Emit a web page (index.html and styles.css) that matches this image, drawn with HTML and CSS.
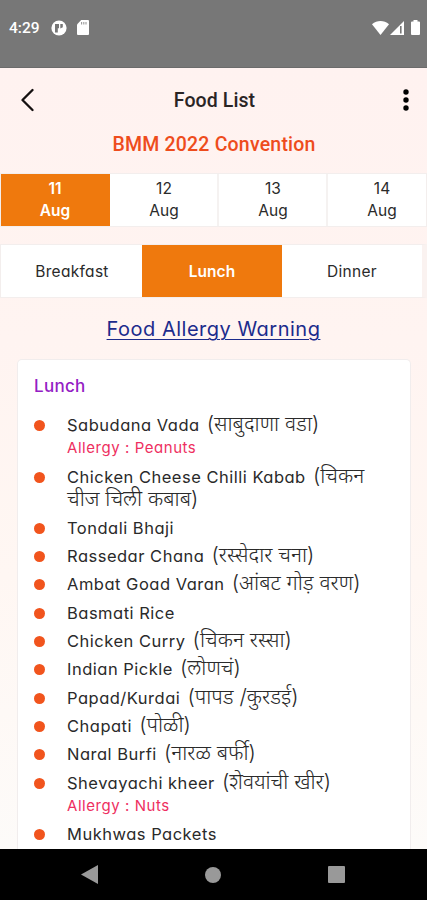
FILE: index.html
```
<!DOCTYPE html>
<html lang="en">
<head>
  <meta charset="UTF-8">
  <meta name="viewport" content="width=device-width, initial-scale=1">
  <title>Food List</title>
  <link rel="stylesheet" href="styles.css">
</head>
<body>
  <div class="status-bar">
    <span class="clock">4:29</span>
    <svg class="app-icon" width="16" height="16" viewBox="0 0 16 16">
      <circle cx="8" cy="8" r="7.6" fill="#fff"/>
      <path d="M4 4h4v4.200H6.800v4.400H4z" fill="#777"/>
      <path d="M9.300 4h2.500v3.200L9.300 8.600z" fill="#777"/>
    </svg>
    <svg class="sd-icon" width="12" height="15" viewBox="0 0 12 15">
      <path d="M4.2 0H11a1 1 0 0 1 1 1v13a1 1 0 0 1-1 1H1a1 1 0 0 1-1-1V4.4z" fill="#fff"/>
      <path d="M4.6 2v2.4M6.8 2v2.4M9 2v2.4" stroke="#999" stroke-width="1.1"/>
    </svg>
    <svg class="wifi-icon" width="17" height="14" viewBox="0 0 17 14">
      <path d="M0 3.2C5-1 12-1 17 3.2L8.5 14z" fill="#fff"/>
    </svg>
    <svg class="signal-icon" width="14" height="14" viewBox="0 0 14 14">
      <path d="M0 14L14 0v14z" fill="#fff"/>
      <path d="M10.8 5v7.6" stroke="#777" stroke-width="1.6"/>
    </svg>
    <svg class="battery-icon" width="9" height="15" viewBox="0 0 9 15">
      <path d="M2.5 0h4v1.5H8a1 1 0 0 1 1 1V14a1 1 0 0 1-1 1H1a1 1 0 0 1-1-1V2.500a1 1 0 0 1 1-1h1.500z" fill="#fff"/>
    </svg>
  </div>

  <main class="screen">
    <header class="header">
      <svg width="14" height="24" viewBox="0 0 14 24">
        <path d="M12.500 2L2.500 12l10 10" fill="none" stroke="#151010" stroke-width="2.300" stroke-linecap="round" stroke-linejoin="round"/>
      </svg>
      <h1 class="title">Food List</h1>
      <svg width="6" height="22" viewBox="0 0 6 22">
        <circle cx="3" cy="3" r="2.700"/>
        <circle cx="3" cy="11" r="2.700"/>
        <circle cx="3" cy="19" r="2.700"/>
      </svg>
    </header>
    <h2 class="event">BMM 2022 Convention</h2>

    <div class="dates">
      <div class="date active"><span>11</span><span>Aug</span></div>
      <div class="date"><span>12</span><span>Aug</span></div>
      <div class="date"><span>13</span><span>Aug</span></div>
      <div class="date"><span>14</span><span>Aug</span></div>
    </div>

    <div class="meals">
      <div class="meal">Breakfast</div>
      <div class="meal active">Lunch</div>
      <div class="meal">Dinner</div>
    </div>

    <a class="warning" href="#">Food Allergy Warning</a>

    <section class="card">
      <h3 class="card-title">Lunch</h3>
      <ul class="food-list">
        <li>Sabudana Vada <span class="mr" lang="mr">(साबुदाणा वडा)</span><div class="allergy">Allergy : Peanuts</div></li>
        <li>Chicken Cheese Chilli Kabab <span class="mr" lang="mr">(चिकन<br>चीज चिली कबाब)</span></li>
        <li>Tondali Bhaji</li>
        <li>Rassedar Chana <span class="mr" lang="mr">(रस्सेदार चना)</span></li>
        <li>Ambat Goad Varan <span class="mr" lang="mr">(आंबट गोड़ वरण)</span></li>
        <li>Basmati Rice</li>
        <li>Chicken Curry <span class="mr" lang="mr">(चिकन रस्सा)</span></li>
        <li>Indian Pickle <span class="mr" lang="mr">(लोणचं)</span></li>
        <li>Papad/Kurdai <span class="mr" lang="mr">(पापड /कुरडई)</span></li>
        <li>Chapati <span class="mr" lang="mr">(पोळी)</span></li>
        <li>Naral Burfi <span class="mr" lang="mr">(नारळ बर्फी)</span></li>
        <li>Shevayachi kheer <span class="mr" lang="mr">(शेवयांची खीर)</span><div class="allergy">Allergy : Nuts</div></li>
        <li>Mukhwas Packets</li>
      </ul>
    </section>
  </main>

  <nav class="nav-bar">
    <svg width="17" height="19" viewBox="0 0 17 19"><path d="M0 9.500L17 0v19z" fill="#999"/></svg>
    <svg width="16" height="16" viewBox="0 0 16 16"><circle cx="8" cy="8" r="8" fill="#999"/></svg>
    <svg width="17" height="17" viewBox="0 0 17 17"><rect width="17" height="17" rx="1" fill="#999"/></svg>
  </nav>
</body>
</html>
```
FILE: styles.css
```
* { margin: 0; padding: 0; box-sizing: border-box; }
body {
  height: 900px;
  display: flex;
  flex-direction: column;
  overflow: hidden;
  font-family: Inter, "Noto Sans", "Noto Sans Devanagari", sans-serif;
  font-feature-settings: "cv11";
  color: #2a2a2a;
}
.status-bar {
  height: 68px;
  flex: none;
  display: flex;
  align-items: center;
  padding: 0 7px 12px 9px;
  background: #777;
  border-bottom: 1px solid #6b6b6b;
}
.clock {
  width: 42px;
  color: #fff;
  font: 500 15.500px Roboto, sans-serif;
}
.sd-icon { margin-left: 10px; }
.wifi-icon { margin-left: auto; }
.signal-icon { margin-left: 1px; }
.battery-icon { margin-left: 7px; }
.screen {
  flex: 1;
  min-height: 0;
  display: flex;
  flex-direction: column;
  overflow: hidden;
  background: linear-gradient(#fff2f0 0%, #fff4f1 35%, #fff7f3 65%, #fdfbf9 100%);
}
.header {
  height: 63px;
  flex: none;
  display: flex;
  align-items: center;
  padding: 0 18px 0 20px;
}
.title {
  flex: 1;
  padding: 2px 8px 0 0;
  text-align: center;
  font: 500 19.500px Roboto, sans-serif;
  letter-spacing: 0.1px;
  color: #2a2424;
}
.event {
  height: 42px;
  flex: none;
  padding-left: 1px;
  text-align: center;
  font: 500 19.500px/28px Roboto, sans-serif;
  letter-spacing: 0.200px;
  color: #ee4c1c;
}
.dates, .meals {
  flex: none;
  display: flex;
  height: 54px;
  background: #fff;
  border: 1px solid #f3eeed;
}
.date {
  width: 109px;
  flex: none;
  display: flex;
  flex-direction: column;
  align-items: center;
  padding: 4px 0 0 1px;
  font-size: 15.500px;
  line-height: 22px;
  border-right: 2px solid #f5f2f1;
}
.meals {
  margin-top: 17px;
  padding-left: 1px;
  border-right: 5px solid #faf2f0;
}
.meal {
  flex: 1;
  display: flex;
  align-items: center;
  justify-content: center;
  font-size: 15.500px;
  letter-spacing: 0.3px;
}
.active {
  background: #ef790d;
  border-color: #ef790d;
  color: #fff;
  font-weight: 600;
}
.meal.active { letter-spacing: 0; }
.warning {
  align-self: center;
  margin-top: 18px;
  font-size: 20px;
  line-height: 26px;
  letter-spacing: 0.500px;
  color: #1c2b8c;
  text-decoration-thickness: 1px;
  text-underline-offset: 3px;
}
.card {
  flex: 1;
  min-height: 0;
  margin: 17px 16px 0 17px;
  padding: 13px 16px 0;
  background: #fff;
  border: 1px solid #f1eded;
  border-bottom: 0;
  border-radius: 5px 5px 0 0;
  overflow: hidden;
}
.card-title {
  font-size: 17px;
  font-weight: 500;
  line-height: 26px;
  letter-spacing: 0.3px;
  color: #9420c4;
}
.food-list {
  list-style: none;
  margin-top: 15.400px;
}
.food-list li {
  position: relative;
  padding-left: 33px;
  margin-bottom: 5.420px;
  font-size: 16.500px;
  line-height: 22.900px;
  letter-spacing: 0.500px;
  white-space: nowrap;
}
.food-list li::before {
  content: "";
  position: absolute;
  left: 0;
  top: 6px;
  width: 11px;
  height: 11px;
  border-radius: 50%;
  background: #f1541d;
}
.mr {
  margin-left: 2px;
  font-size: 21px;
  font-weight: 300;
  line-height: 20px;
  letter-spacing: 0;
}
.food-list .allergy {
  font-size: 15px;
  letter-spacing: 0.550px;
  color: #ee2f5f;
}
.nav-bar {
  height: 51px;
  flex: none;
  display: flex;
  align-items: center;
  justify-content: space-between;
  padding: 0 82px 0 81px;
  background: #000;
}
```
